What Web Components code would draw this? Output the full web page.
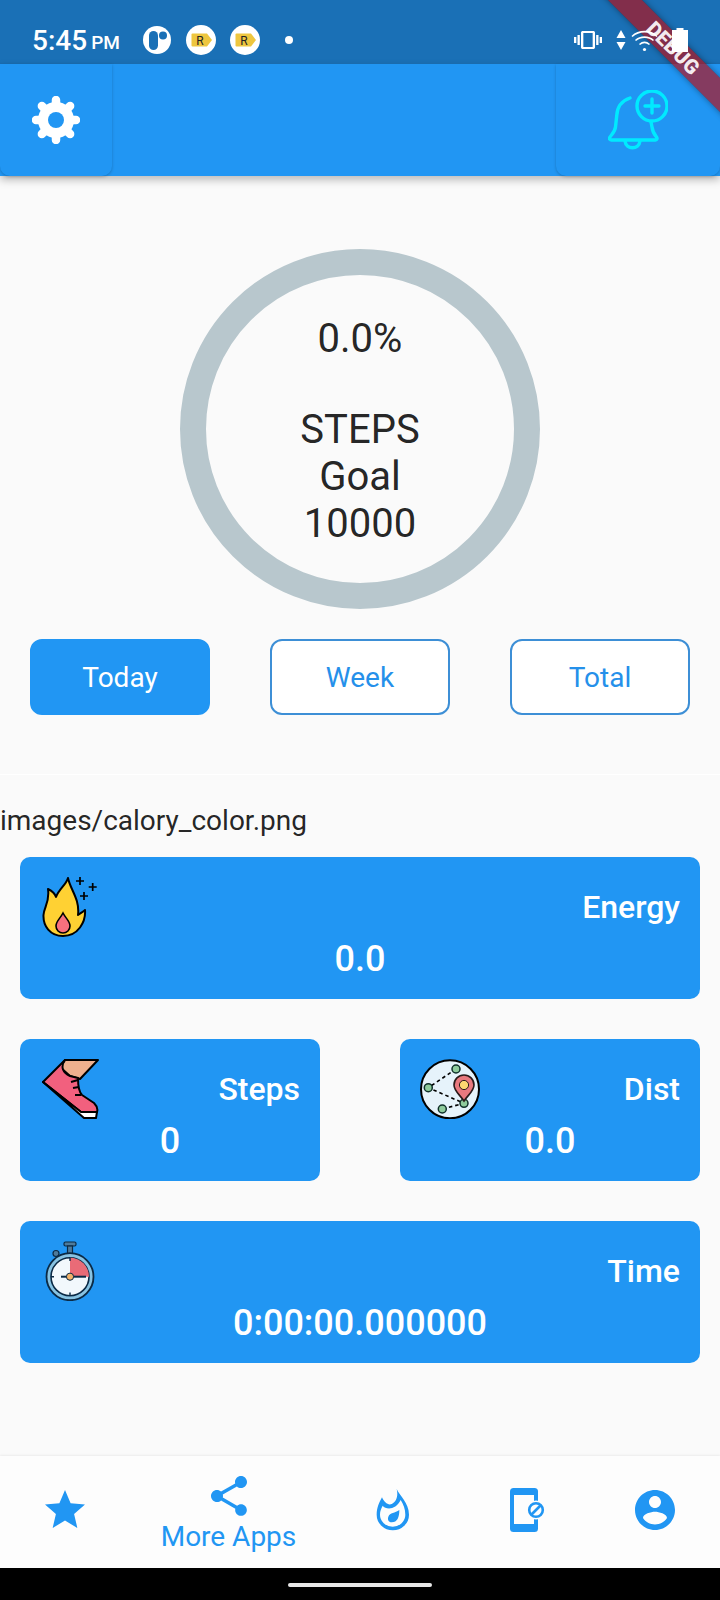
<!DOCTYPE html>
<html lang="en"><head><meta charset="utf-8"><title>Step tracker</title>
<style>
html,body{margin:0;padding:0}
body{width:720px;height:1600px;background:#fafafa;font-family:Roboto,"Liberation Sans",sans-serif;color:#212121;display:flex;flex-direction:column;overflow:hidden;position:relative}
</style></head><body>
<x-status-bar></x-status-bar>
<x-app-bar></x-app-bar>
<x-dashboard>
  <x-progress-ring></x-progress-ring>
  <x-range-tabs></x-range-tabs>
</x-dashboard>
<x-stats>
  <x-stat-card wide label="Energy" value="0.0"><svg slot="icon" width="60" height="60" viewBox="0 0 60 60"><path d="M28 1C30 12 40 22 38 38C41 36 44 34 45 33C46 45 38 59 23 59C10 59 3 49 3.5 38C4 30 10 25 8 12C12 14 15 17 16 20C19 12 26 8 28 1Z" fill="#ffd133" stroke="#000" stroke-width="2" stroke-linejoin="round"/><path d="M23 36C26 42 30 44 30 49a7 7 0 0 1-14 0C16 44 20 42 23 36Z" fill="#f8707e" stroke="#000" stroke-width="1.6"/><path d="M40 0v8M36 4h8M52.700 6v8M48.700 10h8M44 15v8M40 19h8" stroke="#000" stroke-width="1.7"/></svg></x-stat-card>
  <x-stat-card label="Steps" value="0"><svg slot="icon" width="60" height="60" viewBox="0 0 60 60"><path d="M25 1H58L40 20L30 17L20 8Z" fill="#efb08e" stroke="#000" stroke-width="2" stroke-linejoin="round"/><path d="M3 23L25 1C20 8 23 14 30 17L38 19C38 27 39 33 42 36L54 44C57 47 58 50 57 53H41Z" fill="#f2607e" stroke="#000" stroke-width="2" stroke-linejoin="round"/><path d="M3 23L41 53H57L56 59H44Z" fill="#fff" stroke="#000" stroke-width="2" stroke-linejoin="round"/><path d="M31 23L38 21M33 29L39 28M35 36L41 36" stroke="#000" stroke-width="2"/></svg></x-stat-card>
  <x-stat-card label="Dist" value="0.0"><svg slot="icon" width="60" height="60" viewBox="0 0 60 60"><circle cx="30" cy="30.300" r="29" fill="#e6f3fb" stroke="#000" stroke-width="2"/><path d="M36 10L8.300 28.700L44 44.300L22.300 50" fill="none" stroke="#000" stroke-width="1.600" stroke-dasharray="3.500 3"/><g fill="#8ecb9c" stroke="#10302a" stroke-width="1.500"><circle cx="36" cy="10" r="4"/><circle cx="8.300" cy="28.700" r="4"/><circle cx="22.300" cy="50" r="4"/><circle cx="44" cy="44.300" r="4"/></g><path d="M44 42C40 36 34 32 34 26a10 10 0 0 1 20 0C54 32 48 36 44 42Z" fill="#e9797f" stroke="#2a1a1a" stroke-width="1.600"/><circle cx="44" cy="26" r="4.600" fill="#fcd770" stroke="#2a1a1a" stroke-width="1"/></svg></x-stat-card>
  <x-stat-card wide label="Time" value="0:00:00.000000"><svg slot="icon" width="60" height="60" viewBox="0 0 60 60"><rect x="24" y="1" width="12" height="4" rx="1.500" fill="#4f7b9b" stroke="#0b2a45" stroke-width="1.200"/><rect x="27.500" y="5" width="5" height="8" fill="#4f7b9b" stroke="#0b2a45" stroke-width="1.200"/><circle cx="16" cy="12.500" r="3" fill="#4f7b9b" stroke="#0b2a45" stroke-width="1.200"/><circle cx="30" cy="35.700" r="23.500" fill="#88c3e2" stroke="#0b2a45" stroke-width="1.800"/><circle cx="30" cy="35.700" r="19" fill="#f2f8fc" stroke="#0b2a45" stroke-width="1.600"/><path d="M30 35.700V16.700A19 19 0 0 1 49 35.700Z" fill="#e96b77"/><path d="M21 35.700H46" stroke="#0b2a45" stroke-width="2"/><path d="M30 17v3M30 51.500v3M11 35.700h3" stroke="#0b2a45" stroke-width="1.400"/><circle cx="30" cy="35.700" r="3.600" fill="#f4b36a" stroke="#0b2a45" stroke-width="1"/></svg></x-stat-card>
</x-stats>
<x-bottom-nav></x-bottom-nav>
<x-gesture-bar></x-gesture-bar>
<x-debug-banner></x-debug-banner>
<script>
function def(name, css, html){
  customElements.define(name, class extends HTMLElement{
    constructor(){super();const r=this.attachShadow({mode:'open'});
      const v=typeof html==='function'?html(this):html;
      r.innerHTML='<style>'+css+'</style>'+v;}
    connectedCallback(){
      if(typeof html==='function'){const r=this.shadowRoot;r.innerHTML='<style>'+css+'</style>'+html(this);}
    }
  });
}
const tag='<svg width="30" height="30" viewBox="0 0 30 30"><circle cx="15" cy="15" r="15" fill="#fff"/><path d="M6.500 8.500H21L26 15L21 21.500H6.500a1 1 0 0 1-1-1V9.500a1 1 0 0 1 1-1Z" fill="#eec63f"/><text x="14" y="19.500" font-size="12" font-family="Roboto,sans-serif" fill="#222" text-anchor="middle">R</text></svg>';
def('x-status-bar',
`:host{display:flex;align-items:center;height:64px;box-sizing:border-box;padding:16px 32px 0 32px;background:#1a70b6;color:#fff;flex:none}
.t{font:500 28px Roboto,sans-serif;letter-spacing:0}.pm{font:500 19px Roboto,sans-serif;margin-left:4px;position:relative;top:2px}
.l{display:flex;align-items:center;gap:14px;margin-left:23px}.dot{width:8px;height:8px;border-radius:50%;background:#fff;margin-left:11px}
.r{display:flex;align-items:center;margin-left:auto;position:relative;z-index:2}svg{display:block}`,
`<span class="t">5:45</span><span class="pm">PM</span>
<div class="l"><svg style="margin-right:1px" width="28" height="28" viewBox="0 0 28 28"><circle cx="14" cy="14" r="14" fill="#fff"/><rect x="6" y="5" width="9" height="19" rx="4.500" fill="#1a70b6"/><circle cx="20" cy="9.500" r="4" fill="#1a70b6"/></svg>${tag}${tag}<span class="dot"></span></div>
<div class="r">
<svg width="28" height="24" viewBox="0 0 24 24" preserveAspectRatio="none"><path fill="#fff" d="M0 15h2V9H0v6zm3 2h2V7H3v10zm19-8v6h2V9h-2zm-3 8h2V7h-2v10zM16.500 3h-9C6.670 3 6 3.670 6 4.500v15c0 .83.67 1.500 1.500 1.500h9c.83 0 1.500-.67 1.500-1.500v-15c0-.83-.67-1.500-1.500-1.500zM16 19H8V5h8v14z"/></svg>
<svg style="margin-left:14px" width="10" height="20" viewBox="0 0 10 20"><path fill="#fff" d="M5 0L9.500 8H.5ZM5 20L.5 12H9.500Z"/></svg>
<svg style="margin-left:5px" width="27" height="24" viewBox="0 0 27 24" fill="none" stroke="#fff" stroke-width="1.600"><path d="M1 8.500C8 2 19 2 26 8.500"/><path d="M4.500 12.500C9.500 8 17.500 8 22.500 12.500"/><path d="M8.500 16.500C11.500 14 15.500 14 18.500 16.500"/><circle cx="13.500" cy="21.500" r="1.600" fill="#fff" stroke="none"/></svg>
<svg style="margin-left:14px" width="16" height="24" viewBox="0 0 16 24"><path fill="#fff" d="M4.500 0h7v2H16v22H0V2h4.500Z"/></svg>
</div>`);
def('x-icon-button',
`:host{display:flex;align-items:center;justify-content:center;height:112px;background:#2196f3;border-radius:0 0 10px 10px;box-shadow:0 1px 3px rgba(0,0,0,.22)}`,
`<slot></slot>`);
def('x-app-bar',
`:host{display:flex;justify-content:space-between;height:112px;background:#2196f3;box-shadow:0 4px 8px rgba(0,0,0,.25);flex:none;position:relative}
.a{width:112px}.b{width:164px}svg{display:block}`,
`<x-icon-button class="a"><svg width="48" height="48" viewBox="0 0 48 48"><path d="M24 4V44M4 24H44M9.900 9.900L38.100 38.100M38.100 9.900L9.900 38.100" stroke="#fff" stroke-width="8.500" stroke-linecap="round"/><circle cx="24" cy="24" r="18" fill="#fff"/><circle cx="24" cy="24" r="8" fill="#2196f3"/></svg></x-icon-button>
<x-icon-button class="b"><svg width="60" height="60" viewBox="0 0 60 60" fill="none" stroke="#00eaff" stroke-width="3.400" stroke-linecap="round" stroke-linejoin="round"><path d="M22 8C13 11 9 18 8.700 26L7.500 37C7 42 3 45 1.700 47.500C1 49 2 50 3.500 50H47.500C49 50 49.500 48.500 48.500 47C46 44 44.500 42 44 37L43 32"/><path d="M17 51C18 60 31 60 32 51"/><circle cx="44" cy="16" r="15"/><path d="M44 9V23M37 16H51"/></svg></x-icon-button>`);
def('x-dashboard',
`:host{display:flex;flex-direction:column;align-items:center;height:599px;box-sizing:border-box;padding-top:73px;border-bottom:1px solid #fff;flex:none}`,
`<slot></slot>`);
def('x-progress-ring',
`:host{display:flex;align-items:center;justify-content:center;width:360px;height:360px;box-sizing:border-box;border:26px solid #b8c7cd;border-radius:50%;flex:none;font:400 40px Roboto,sans-serif;color:rgba(0,0,0,.87);text-align:center}
.w{padding-top:3px}.gap{height:44px}`,
`<div class="w"><div>0.0%</div><div class="gap"></div><div>STEPS</div><div>Goal</div><div>10000</div></div>`);
def('x-range-tabs',
`:host{display:flex;justify-content:space-between;width:660px;margin-top:30px}`,
`<x-tab active>Today</x-tab><x-tab>Week</x-tab><x-tab>Total</x-tab>`);
def('x-tab',
`:host{display:flex;align-items:center;justify-content:center;box-sizing:border-box;width:180px;height:76px;border-radius:12px;border:2px solid #3d8fd6;background:#fff;color:#2590ea;font:400 28px Roboto,sans-serif}
:host([active]){background:#2196f3;border-color:#2196f3;color:#fff}`,
`<slot></slot>`);
def('x-stats',
`:host{display:flex;flex-wrap:wrap;flex-direction:row;justify-content:space-between;align-content:flex-start;gap:40px 80px;padding:0 20px;box-sizing:border-box;flex:1;position:relative}
.p{flex:0 0 100%;margin:29px -20px -20px;font:400 28px Roboto,sans-serif;color:rgba(0,0,0,.87);height:33px;line-height:33px}`,
`<div class="p">images/calory_color.png</div><slot></slot>`);
def('x-stat-card',
`:host{display:grid;grid-template-columns:auto 1fr;grid-template-rows:60px 42px;row-gap:1px;box-sizing:border-box;width:300px;height:142px;padding:20px 20px 19px;background:#2196f3;border-radius:10px;color:#fff;font-family:Roboto,sans-serif;font-weight:500}
:host([wide]){width:680px}
.i{grid-row:1;grid-column:1;line-height:0}.l{grid-row:1;grid-column:2;align-self:center;text-align:right;font-size:32px;line-height:37px}
.v{grid-row:2;grid-column:1/-1;text-align:center;font-size:36px;line-height:42px}`,
el=>`<div class="i"><slot name="icon"></slot></div><div class="l">${el.getAttribute('label')||''}</div><div class="v">${el.getAttribute('value')||''}</div>`);
def('x-bottom-nav',
`:host{display:grid;grid-template-columns:130px 200px 130px 130px 130px;height:112px;background:#fdfdfd;box-shadow:0 -1px 2px rgba(0,0,0,.06);flex:none;color:#2196f3}
.n{display:flex;flex-direction:column;align-items:center;justify-content:center;padding-bottom:4px}.n svg{display:block}
.m{padding:0 3px 0 0}
.x{font:400 28px Roboto,sans-serif;line-height:33px}`,
`<div class="n"><svg width="48" height="48" viewBox="0 0 24 24" fill="#2196f3"><path d="M12 17.270L18.180 21l-1.640-7.030L22 9.240l-7.190-.61L12 2 9.190 8.630 2 9.240l5.460 4.730L5.820 21z"/></svg></div>
<div class="n m"><svg width="48" height="48" viewBox="0 0 24 24" fill="#2196f3"><path d="M18 16.080c-.76 0-1.440.3-1.960.77L8.910 12.700c.05-.23.09-.46.09-.7s-.04-.47-.09-.7l7.050-4.110c.54.5 1.250.81 2.040.81 1.660 0 3-1.340 3-3s-1.340-3-3-3-3 1.340-3 3c0 .24.04.47.09.7L8.040 9.810C7.500 9.310 6.790 9 6 9c-1.660 0-3 1.340-3 3s1.340 3 3 3c.79 0 1.500-.31 2.040-.81l7.120 4.160c-.05.21-.08.43-.08.65 0 1.610 1.310 2.920 2.920 2.920s2.920-1.310 2.920-2.920-1.310-2.920-2.920-2.920z"/></svg><span class="x">More Apps</span></div>
<div class="n"><svg style="margin-right:4px" width="34" height="44" viewBox="48 143 102 130"><path fill="#2196f3" d="M110 145C118 165 147 185 147 222A48.500 47 0 0 1 50 222C50 200 58 185 66 170C72 185 85 195 95 190C110 183 115 165 110 145Z"/><path fill="#fdfdfd" d="M68 195C78 208 108 208 122 178C130 190 136 205 136 222A38 36 0 0 1 60 222C60 212 63 204 68 195Z"/><path fill="#2196f3" d="M118 208C118 230 112 245 95 245C85 245 82 235 85 228C90 215 105 218 118 208Z"/></svg></div>
<div class="n"><svg style="margin-left:6px" width="36" height="44" viewBox="0 0 36 44"><rect x="0" y="0" width="28" height="44" rx="3.500" fill="#2196f3"/><rect x="4" y="7" width="20" height="29" fill="#fdfdfd"/><circle cx="26" cy="22" r="9.500" fill="#fdfdfd"/><circle cx="26" cy="22" r="6.800" fill="none" stroke="#2196f3" stroke-width="2.600"/><path d="M21.500 26.500L30.500 17.500" stroke="#2196f3" stroke-width="2.600"/></svg></div>
<div class="n"><svg width="48" height="48" viewBox="0 0 24 24" fill="#2196f3"><path d="M12 2C6.480 2 2 6.480 2 12s4.480 10 10 10 10-4.480 10-10S17.520 2 12 2zm0 3c1.660 0 3 1.340 3 3s-1.340 3-3 3-3-1.340-3-3 1.340-3 3-3zm0 14.200c-2.500 0-4.710-1.280-6-3.220.03-1.990 4-3.080 6-3.080 1.990 0 5.970 1.090 6 3.080-1.290 1.940-3.500 3.220-6 3.220z"/></svg></div>`);
def('x-gesture-bar',
`:host{display:flex;align-items:center;justify-content:center;height:32px;background:#000;flex:none}i{display:block;width:144px;height:4px;border-radius:2px;background:#e8e8e8;position:relative;top:1px}`,
`<i></i>`);
def('x-debug-banner',
`:host{position:absolute;top:0;right:0;width:180px;height:180px;overflow:hidden;pointer-events:none;z-index:1}
.b{position:absolute;left:23px;top:36px;width:220px;height:24px;transform:rotate(45deg);background:rgba(185,12,20,.66);box-shadow:0 0 6px rgba(0,0,0,.4);color:rgba(255,255,255,.92);font:900 20.400px/24px Roboto,sans-serif;text-align:center}`,
`<div class="b">DEBUG</div>`);
</script>
</body></html>
